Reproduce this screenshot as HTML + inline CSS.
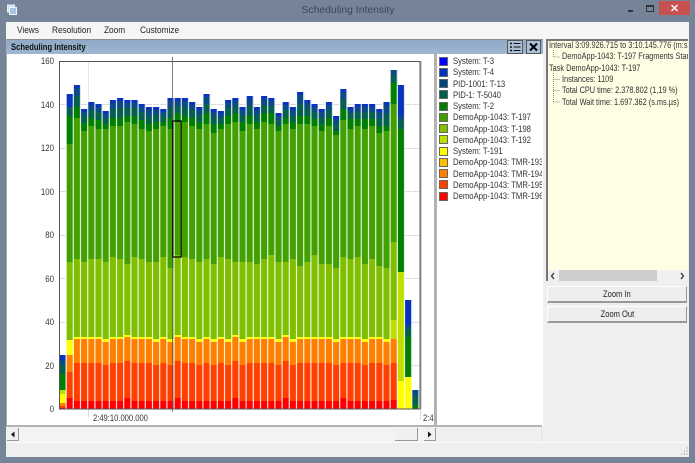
<!DOCTYPE html>
<html><head><meta charset="utf-8"><style>
*{box-sizing:border-box}
html,body{margin:0;padding:0}
body{width:695px;height:463px;position:relative;overflow:hidden;background:#76849a;font-family:"Liberation Sans",sans-serif;color:#222}
.a{position:absolute}
.t{position:absolute;font-size:9.2px;line-height:11px;white-space:nowrap;transform:scaleX(.8);transform-origin:0 0}
.m{position:absolute;font-size:9.2px;line-height:11px;white-space:nowrap;transform:scaleX(.9);transform-origin:0 0}
.y{position:absolute;font-size:9.4px;line-height:11px;width:20px;text-align:right;left:33.5px;color:#333;transform:scaleX(.84);transform-origin:100% 0}
.s{position:absolute;left:439px;width:9px;height:9px;border:1px solid #666}
.l{position:absolute;left:452.5px;width:106px;overflow:hidden;font-size:9.2px;line-height:11px;white-space:nowrap;color:#333;transform:scaleX(.84);transform-origin:0 0}
.b{position:absolute;left:547px;width:140px;background:#eee;border-top:1px solid #fff;border-left:1px solid #fff;border-right:1px solid #999;border-bottom:2px solid #999;text-align:center;font-size:9.2px;line-height:14px;color:#222}
.b span{display:inline-block;transform:scaleX(.82)}
</style></head><body>
<div class="a" style="left:0;top:0;width:695px;text-align:center;padding-left:1px;top:5px;font-size:10.4px;line-height:12px;color:#3c4756">Scheduling Intensity</div>
<svg class="a" style="left:6px;top:4px" width="12" height="12" viewBox="0 0 12 12"><rect x="1.5" y="1" width="7" height="7" fill="#cfe0f2" stroke="#e8f0f8"/><rect x="3.5" y="3.5" width="7" height="7" fill="#a9c4e2" stroke="#f0f5fb"/></svg>
<div class="a" style="left:628px;top:10px;width:5px;height:2px;background:#333"></div>
<div class="a" style="left:646px;top:5px;width:8px;height:7px;border:1px solid #333;border-top-width:2px"></div>
<div class="a" style="left:659px;top:1px;width:31px;height:14px;background:#c75050"></div>
<svg class="a" style="left:670px;top:4px" width="9" height="8" viewBox="0 0 9 8"><path d="M1.5 1L7.5 7M7.5 1L1.5 7" stroke="#fff" stroke-width="1.5"/></svg>

<div class="a" style="left:6px;top:22px;width:683px;height:435px;background:#efefef"></div>
<div class="a" style="left:6px;top:22px;width:683px;height:17px;background:#f5f5f5"></div>
<div class="m" style="left:17px;top:25px">Views</div>
<div class="m" style="left:51.5px;top:25px">Resolution</div>
<div class="m" style="left:104px;top:25px">Zoom</div>
<div class="m" style="left:140px;top:25px">Customize</div>

<div class="a" style="left:6px;top:39px;width:537px;height:388px;background:#fff;border-left:1px solid #aaa"></div>
<div class="a" style="left:7px;top:39px;width:536px;height:15px;background:linear-gradient(#8fa9c6,#9db6d2);border-top:1px solid #8a8f96"></div>
<div class="a" style="left:11px;top:42px;font-size:9.2px;line-height:11px;font-weight:bold;color:#111;white-space:nowrap;transform:scaleX(.83);transform-origin:0 0">Scheduling Intensity</div>
<svg class="a" style="left:507px;top:40px" width="34" height="14" viewBox="0 0 34 14"><rect x="0.5" y="0.5" width="15" height="13" fill="#a9c0d8" stroke="#555"/><path d="M3 3.5h2M3 7h2M3 10.5h2" stroke="#111" stroke-width="1.6"/><path d="M6.5 3.5h7M6.5 7h7M6.5 10.5h7" stroke="#111"/><rect x="19.5" y="0.5" width="14" height="13" fill="#a9c0d8" stroke="#555"/><path d="M23 3.5L30 10.5M30 3.5L23 10.5" stroke="#000" stroke-width="2"/></svg>

<div class="y" style="top:55px">160</div>
<div class="y" style="top:98.5px">140</div>
<div class="y" style="top:142px">120</div>
<div class="y" style="top:185.5px">100</div>
<div class="y" style="top:229px">80</div>
<div class="y" style="top:272.5px">60</div>
<div class="y" style="top:316px">40</div>
<div class="y" style="top:359.5px">20</div>
<div class="y" style="top:403px">0</div>

<svg class="a" style="left:0;top:0" width="695" height="463" viewBox="0 0 695 463">
<g stroke="#dcdcdc" stroke-width="1"><path d="M59 104.5H420M59 148.5H420M59 191.5H420M59 235.5H420M59 278.5H420M59 322.5H420M59 365.5H420"/><path d="M88.5 61V417M420.5 409V420"/></g>
<rect x="59.3" y="355" width="6.6" height="5" fill="#0a33bd"/><rect x="59.3" y="360" width="6.6" height="5" fill="#0b4a84"/><rect x="59.3" y="365" width="6.6" height="9" fill="#06604f"/><rect x="59.3" y="374" width="6.6" height="16" fill="#007f00"/><rect x="59.3" y="390" width="6.6" height="4" fill="#bfdf00"/><rect x="59.3" y="394" width="6.6" height="9" fill="#ff0"/><rect x="59.3" y="403" width="6.6" height="3" fill="#ff7f00"/><rect x="59.3" y="406" width="6.6" height="2" fill="#ff3f00"/><rect x="59.3" y="408" width="6.6" height="1" fill="#f00"/>
<rect x="66.5" y="94" width="7.2" height="13" fill="#0a33bd"/><rect x="66.5" y="107" width="7.2" height="9" fill="#06604f"/><rect x="66.5" y="116" width="7.2" height="28" fill="#007f00"/><rect x="66.5" y="144" width="7.2" height="118" fill="#3f9f00"/><rect x="66.5" y="262" width="7.2" height="78" fill="#7fbf00"/><rect x="66.5" y="340" width="7.2" height="15" fill="#ff0"/><rect x="66.5" y="355" width="7.2" height="17" fill="#ff7f00"/><rect x="66.5" y="372" width="7.2" height="26" fill="#ff3f00"/><rect x="66.5" y="398" width="7.2" height="11" fill="#f00"/>

<path fill="#0a33bd" d="M73.7 409V85h7.2V109h7.2V102h7.2V104h7.2V111h7.2V100h7.2V98h7.2V100h7.2V100h7.2V104h7.2V107h7.2V107h7.2V109h7.2V98h7.2V98h7.2V98h7.2V102h7.2V107h7.2V94h7.2V109h7.2V111h7.2V100h7.2V98h7.2V107h7.2V96h7.2V107h7.2V96h7.2V98h7.2V113h7.2V102h7.2V107h7.2V92h7.2V100h7.2V104h7.2V109h7.2V102h7.2V116h7.2V89h7.2V107h7.2V104h7.2V104h7.2V104h7.2V109h7.2V102h7.2V409Z"/>
<path fill="#0b4a84" d="M73.7 409V88h7.2V112h7.2V105h7.2V107h7.2V114h7.2V103h7.2V101h7.2V103h7.2V103h7.2V107h7.2V110h7.2V110h7.2V112h7.2V101h7.2V101h7.2V101h7.2V105h7.2V110h7.2V97h7.2V112h7.2V114h7.2V103h7.2V101h7.2V110h7.2V99h7.2V110h7.2V99h7.2V101h7.2V116h7.2V105h7.2V110h7.2V95h7.2V103h7.2V107h7.2V112h7.2V105h7.2V119h7.2V92h7.2V110h7.2V107h7.2V107h7.2V107h7.2V112h7.2V105h7.2V409Z"/>
<path fill="#06604f" d="M73.7 409V96h7.2V116h7.2V110h7.2V112h7.2V118h7.2V109h7.2V108h7.2V108h7.2V108h7.2V112h7.2V116h7.2V115h7.2V116h7.2V108h7.2V106h7.2V107h7.2V110h7.2V115h7.2V104h7.2V117h7.2V118h7.2V108h7.2V106h7.2V115h7.2V106h7.2V115h7.2V105h7.2V106h7.2V120h7.2V110h7.2V115h7.2V104h7.2V108h7.2V112h7.2V117h7.2V110h7.2V124h7.2V99h7.2V113h7.2V112h7.2V112h7.2V112h7.2V118h7.2V114h7.2V409Z"/>
<path fill="#007f00" d="M73.7 409V107h7.2V123h7.2V118h7.2V120h7.2V124h7.2V118h7.2V118h7.2V116h7.2V116h7.2V120h7.2V124h7.2V122h7.2V122h7.2V118h7.2V113h7.2V116h7.2V118h7.2V122h7.2V113h7.2V124h7.2V124h7.2V116h7.2V113h7.2V122h7.2V116h7.2V122h7.2V113h7.2V113h7.2V126h7.2V118h7.2V122h7.2V116h7.2V116h7.2V119h7.2V124h7.2V118h7.2V131h7.2V109h7.2V119h7.2V119h7.2V119h7.2V119h7.2V126h7.2V126h7.2V409Z"/>
<path fill="#42a000" d="M73.7 409V118h7.2V131h7.2V126h7.2V129h7.2V129h7.2V126h7.2V126h7.2V122h7.2V124h7.2V129h7.2V131h7.2V129h7.2V126h7.2V129h7.2V122h7.2V122h7.2V126h7.2V129h7.2V124h7.2V133h7.2V129h7.2V124h7.2V122h7.2V131h7.2V124h7.2V129h7.2V122h7.2V124h7.2V131h7.2V124h7.2V129h7.2V124h7.2V124h7.2V126h7.2V131h7.2V126h7.2V135h7.2V120h7.2V129h7.2V126h7.2V129h7.2V126h7.2V133h7.2V131h7.2V409Z"/>
<path fill="#7fbf00" d="M73.7 409V259h7.2V262h7.2V259h7.2V259h7.2V262h7.2V257h7.2V259h7.2V264h7.2V257h7.2V259h7.2V262h7.2V262h7.2V257h7.2V268h7.2V255h7.2V257h7.2V259h7.2V262h7.2V259h7.2V264h7.2V257h7.2V259h7.2V262h7.2V262h7.2V262h7.2V264h7.2V259h7.2V255h7.2V262h7.2V262h7.2V259h7.2V266h7.2V262h7.2V255h7.2V264h7.2V264h7.2V268h7.2V257h7.2V259h7.2V257h7.2V264h7.2V259h7.2V266h7.2V268h7.2V409Z"/>
<path fill="#ff0" d="M73.7 409V337h28.8V339h7.2V337h14.4V335h7.2V337h21.6V339h7.2V337h7.2V339h7.2V335h7.2V337h14.4V339h7.2V337h7.2V339h7.2V337h7.2V339h7.2V335h7.2V339h7.2V337h28.8V339h7.2V335h7.2V339h7.2V337h36V339h7.2V337h21.6V339h7.2V337h14.4V339h7.2V409Z"/>
<path fill="#ff7f00" d="M73.7 409V339h28.8V342h7.2V339h14.4V337h7.2V339h21.6V342h7.2V339h7.2V342h7.2V337h7.2V339h14.4V342h7.2V339h7.2V342h7.2V339h7.2V342h7.2V337h7.2V342h7.2V339h28.8V342h7.2V337h7.2V342h7.2V339h36V342h7.2V339h21.6V342h7.2V339h14.4V342h7.2V409Z"/>
<path fill="#ff3f00" d="M73.7 409V363h28.8V365h7.2V363h14.4V361h7.2V363h21.6V365h7.2V363h7.2V365h7.2V361h7.2V363h14.4V365h7.2V363h7.2V365h7.2V363h7.2V365h7.2V361h7.2V365h7.2V363h28.8V365h7.2V361h7.2V365h7.2V363h36V365h7.2V363h21.6V365h7.2V363h14.4V365h7.2V409Z"/>
<path fill="#f00" d="M73.7 409V401h50.4V398h7.2V401h43.2V398h7.2V401h50.4V398h7.2V401h43.2V398h7.2V401h50.4V398h7.2V401h43.2V409Z"/>

<rect x="390.5" y="70" width="7.2" height="5" fill="#0b4a84"/><rect x="390.5" y="75" width="7.2" height="8" fill="#06604f"/><rect x="390.5" y="83" width="7.2" height="21" fill="#007f00"/><rect x="390.5" y="104" width="7.2" height="138" fill="#42a000"/><rect x="390.5" y="242" width="7.2" height="78" fill="#7fbf00"/><rect x="390.5" y="320" width="7.2" height="19" fill="#bfdf00"/><rect x="390.5" y="339" width="7.2" height="24" fill="#ff7f00"/><rect x="390.5" y="363" width="7.2" height="37" fill="#ff3f00"/><rect x="390.5" y="400" width="7.2" height="9" fill="#f00"/>
<rect x="397.7" y="85" width="7.2" height="31" fill="#0a33bd"/><rect x="397.7" y="116" width="7.2" height="4" fill="#0b4a84"/><rect x="397.7" y="120" width="7.2" height="9" fill="#06604f"/><rect x="397.7" y="129" width="7.2" height="143" fill="#007f00"/><rect x="397.7" y="272" width="7.2" height="109" fill="#bfdf00"/><rect x="397.7" y="381" width="7.2" height="28" fill="#ff0"/>
<rect x="404.9" y="300" width="7.2" height="25" fill="#0a33bd"/><rect x="404.9" y="325" width="7.2" height="4" fill="#0b4a84"/><rect x="404.9" y="329" width="7.2" height="8" fill="#06604f"/><rect x="404.9" y="337" width="7.2" height="40" fill="#007f00"/><rect x="404.9" y="377" width="7.2" height="32" fill="#ff0"/>
<rect x="412.1" y="390" width="7" height="6" fill="#0b4a84"/><rect x="412.1" y="396" width="7" height="9" fill="#06604f"/><rect x="412.1" y="405" width="7" height="4" fill="#007f00"/>

<line x1="65.5" y1="235.5" x2="419" y2="235.5" stroke="#fff" stroke-width="347" stroke-dasharray="1.2 6" opacity=".85"/>
<rect x="59.5" y="61.5" width="360.5" height="347.5" fill="none" stroke="#555" stroke-width="1"/>
<rect x="420.5" y="61" width="1" height="348" fill="#aaa"/>
<path d="M172.5 57V412" stroke="#555" stroke-width="1" opacity=".75"/>
<rect x="172.8" y="121" width="8.4" height="136" fill="none" stroke="#000" stroke-width="1.2"/>
</svg>

<div class="a" style="left:93px;top:412px;color:#333;font-size:9.4px;line-height:11px;white-space:nowrap;transform:scaleX(.81);transform-origin:0 0">2:49:10.000.000</div>
<div class="a" style="left:422.5px;top:412px;width:13px;overflow:hidden;font-size:9.4px;line-height:11px;color:#333;transform:scaleX(.81);transform-origin:0 0">2:49</div>

<div class="a" style="left:434px;top:54px;width:3px;height:372px;background:#b2b2b2"></div>
<div class="a" style="left:7px;top:424.5px;width:535px;height:2.5px;background:#b4b4b4"></div>

<div class="s" style="top:56.7px;background:#00f"></div><div class="l" style="top:56px">System: T-3</div>
<div class="s" style="top:68px;background:#0033bf"></div><div class="l" style="top:67.2px">System: T-4</div>
<div class="s" style="top:79.2px;background:#00477f"></div><div class="l" style="top:78.5px">PID-1001: T-13</div>
<div class="s" style="top:90.4px;background:#005f4f"></div><div class="l" style="top:89.7px">PID-1: T-5040</div>
<div class="s" style="top:101.7px;background:#007f00"></div><div class="l" style="top:101px">System: T-2</div>
<div class="s" style="top:113px;background:#3f9f00"></div><div class="l" style="top:112.2px">DemoApp-1043: T-197</div>
<div class="s" style="top:124.2px;background:#7fbf00"></div><div class="l" style="top:123.5px">DemoApp-1043: T-198</div>
<div class="s" style="top:135.4px;background:#bfdf00"></div><div class="l" style="top:134.7px">DemoApp-1043: T-192</div>
<div class="s" style="top:146.7px;background:#ff0"></div><div class="l" style="top:146px">System: T-191</div>
<div class="s" style="top:158px;background:#ffbf00"></div><div class="l" style="top:157.2px">DemoApp-1043: TMR-193</div>
<div class="s" style="top:169.2px;background:#ff7f00"></div><div class="l" style="top:168.5px">DemoApp-1043: TMR-194</div>
<div class="s" style="top:180.4px;background:#ff3f00"></div><div class="l" style="top:179.7px">DemoApp-1043: TMR-195</div>
<div class="s" style="top:191.7px;background:#f00"></div><div class="l" style="top:191px">DemoApp-1043: TMR-196</div>

<div class="a" style="left:7px;top:427px;width:535px;height:15px;background:#f3f3f3"></div>
<div class="a" style="left:7px;top:428px;width:12px;height:13px;background:#f0f0f0;border-right:1px solid #999;border-bottom:1px solid #999"></div>
<svg class="a" style="left:10px;top:431px" width="6" height="7"><path d="M1 3.5L4.5 0.5V6.5Z" fill="#111"/></svg>
<div class="a" style="left:395px;top:428px;width:23px;height:13px;background:#f0f0f0;border-right:1px solid #999;border-bottom:1px solid #999"></div>
<div class="a" style="left:424px;top:428px;width:12px;height:13px;background:#f0f0f0;border-right:1px solid #999;border-bottom:1px solid #999"></div>
<svg class="a" style="left:427px;top:431px" width="6" height="7"><path d="M4.5 3.5L1 0.5V6.5Z" fill="#111"/></svg>
<div class="a" style="left:436px;top:427px;width:106px;height:15px;background:#f0f0f0;border-right:1px solid #e4e4e4"></div>
<div class="a" style="left:6px;top:442px;width:683px;height:1px;background:#fafafa"></div>

<div class="a" style="left:546px;top:39px;width:142px;height:242px;background:#fffde3;border-left:2px solid #777;border-top:2px solid #777;overflow:hidden">
<svg class="a" style="left:0;top:0" width="140" height="70" viewBox="548 41 140 70"><path d="M553.5 50V57H560M553.5 73V102M553.5 79.5H560M553.5 90.5H560M553.5 102H560" fill="none" stroke="#888" stroke-width="1" stroke-dasharray="1 1"/></svg>
<div class="t" style="left:1px;top:-1.5px;color:#333">Interval 3:09.926.715 to 3:10.145.776 (m:s.ms.µs)</div>
<div class="t" style="left:14px;top:10px;color:#333">DemoApp-1043: T-197 Fragments Start</div>
<div class="t" style="left:1px;top:21.5px;color:#333">Task DemoApp-1043: T-197</div>
<div class="t" style="left:14px;top:33px;color:#333">Instances: 1109</div>
<div class="t" style="left:14px;top:44.2px;color:#333">Total CPU time: 2.378.802 (1,19 %)</div>
<div class="t" style="left:14px;top:55.5px;color:#333">Total Wait time: 1.697.362 (s.ms.µs)</div>
</div>
<div class="a" style="left:548px;top:270px;width:140px;height:11px;background:#f0f0f0"></div>
<div class="a" style="left:559px;top:270px;width:98px;height:11px;background:#cdcdcd"></div>
<svg class="a" style="left:550px;top:272px" width="6" height="8"><path d="M4 1L1.5 4L4 7" fill="none" stroke="#444" stroke-width="1.4"/></svg>
<svg class="a" style="left:679px;top:272px" width="6" height="8"><path d="M2 1L4.5 4L2 7" fill="none" stroke="#444" stroke-width="1.4"/></svg>

<div class="b" style="top:286px;height:16.5px"><span>Zoom In</span></div>
<div class="b" style="top:306px;height:17px"><span>Zoom Out</span></div>
<svg class="a" style="left:680px;top:447px" width="9" height="9"><path d="M6.5 1h1M4 4h1M6.5 4h1M1.5 7h1M4 7h1M6.5 7h1" stroke="#999" stroke-width="1.2"/></svg>
</body></html>
